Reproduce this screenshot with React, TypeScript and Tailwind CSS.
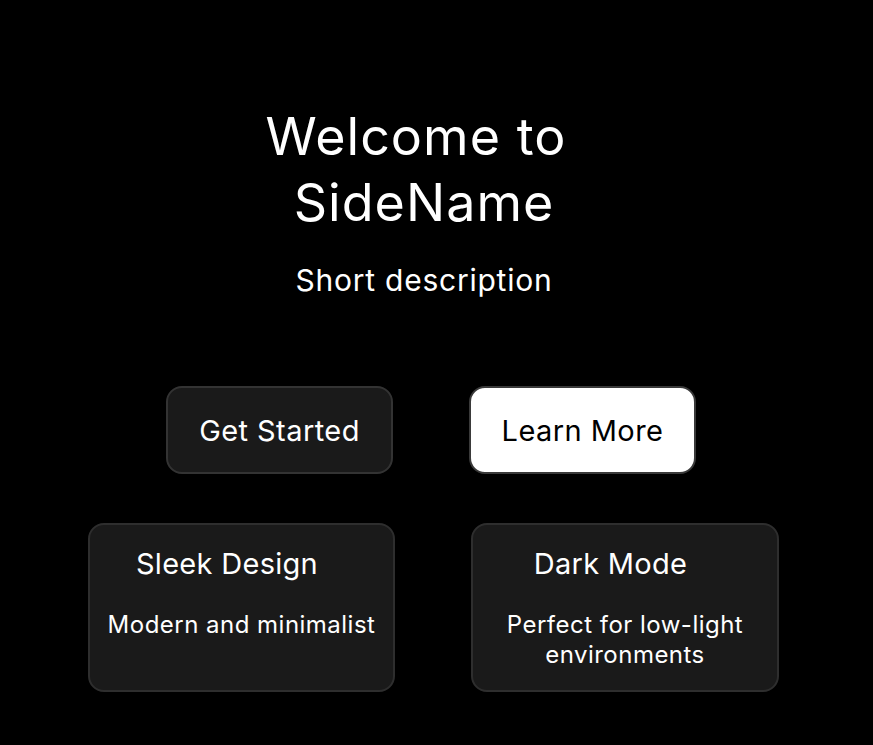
import React from 'react';

const features = [
    { title: 'Sleek Design', text: 'Modern and minimalist', w: 'w-[307px]' },
    { title: 'Dark Mode', text: 'Perfect for low-light environments', w: 'w-[308px]' },
];

export default function App() {
    return (
        <main
            className="min-h-[745px] w-full bg-black text-white"
            style={{ fontFamily: "Inter, 'Noto Sans', sans-serif" }}
        >
            {/* Hero */}
            <section className="flex flex-col pt-[104px]">
                <h1 className="ml-[254px] w-[340px] text-center text-[52px] leading-[66px] font-normal tracking-[0.02em]">
                    <span className="block pr-4">Welcome to</span>
                    <span className="block">SideName</span>
                </h1>
                <p className="mt-[26px] ml-[264px] w-[320px] text-center text-3xl leading-9 tracking-[0.025em]">
                    Short description
                </p>
            </section>

            {/* Actions */}
            <div className="mt-[88px] ml-[166px] flex gap-[76px]">
                <button className="h-[88px] w-[227px] rounded-2xl border-2 border-[#333333] bg-[#1a1a1a] pt-[2px] text-[29px] tracking-[0.015em] text-white">
                    Get Started
                </button>
                <button className="h-[88px] w-[227px] rounded-2xl border-2 border-[#3a3a3a] bg-white pt-[2px] text-[29px] tracking-[0.015em] text-black">
                    Learn More
                </button>
            </div>

            {/* Features */}
            <div className="mt-[49px] ml-[88px] flex gap-[76px]">
                {features.map((f) => (
                    <div
                        key={f.title}
                        className={`${f.w} h-[169px] rounded-2xl border-2 border-[#2e2e2e] bg-[#1a1a1a] px-4 pt-[17px]`}
                    >
                        <h3 className="pr-[29px] text-center text-[29px] leading-[44px] tracking-[0.01em]">{f.title}</h3>
                        <p className="mt-[24px] text-center text-2xl leading-[30px] tracking-[0.02em]">{f.text}</p>
                    </div>
                ))}
            </div>
        </main>
    );
}
